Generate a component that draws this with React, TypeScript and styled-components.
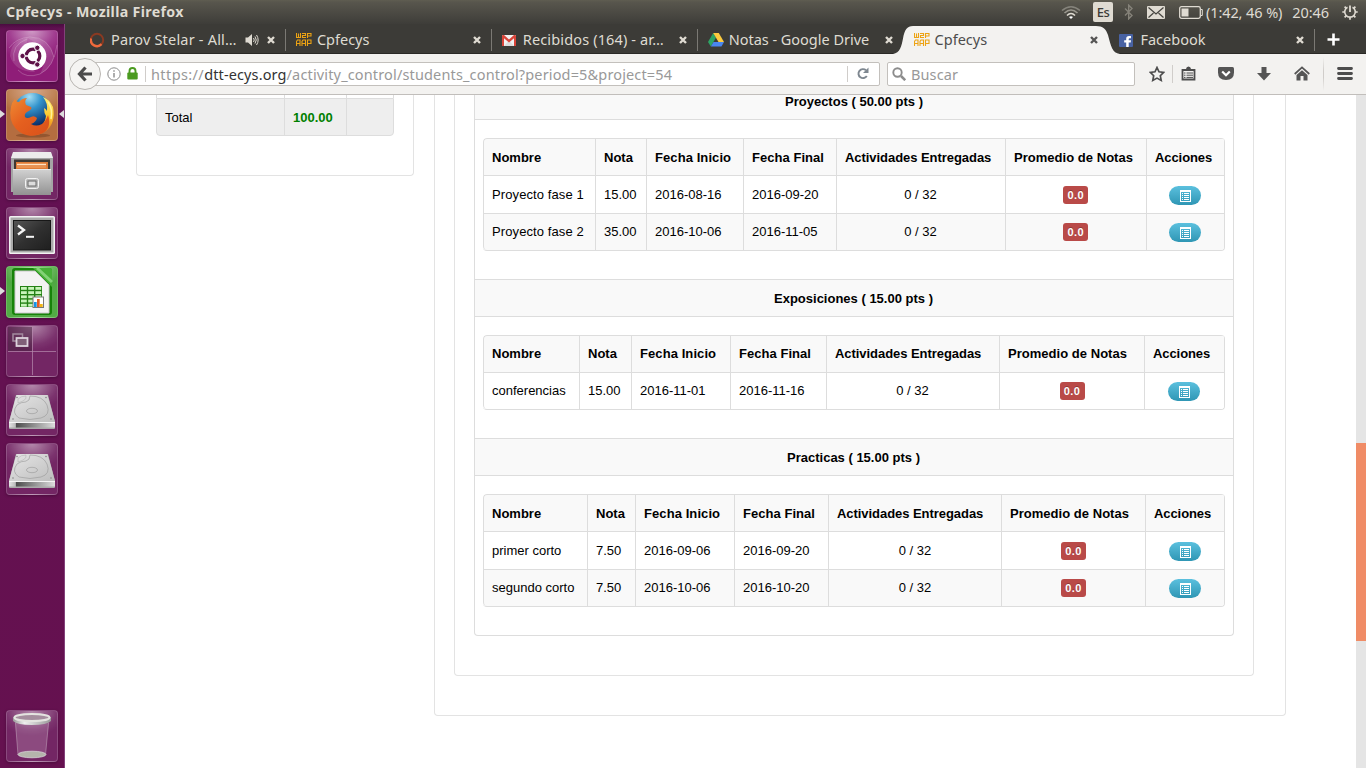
import React from "react";
import styled, { createGlobalStyle } from "styled-components";

const Global = createGlobalStyle`
  * { box-sizing: border-box; }
  html, body { margin: 0; padding: 0; overflow: hidden; background: #fff; }
  svg { display: block; flex: none; }
`;

const uiFont = `"Noto Sans", "Open Sans", sans-serif`;

const Desktop = styled.div`
  width: 1366px;
  height: 768px;
  display: flex;
  flex-direction: column;
  overflow: hidden;
  font-family: ${uiFont};
`;

const TopPanel = styled.header`
  height: 24px;
  flex: none;
  display: flex;
  align-items: center;
  background: linear-gradient(#5f5d51 0, #58564d 2px, #3e3d39 100%);
  color: #dfdbd2;
  padding-left: 6px;
`;

const UiText = styled.span<{ $size?: number; $ls?: number; $w?: number; $bold?: boolean }>`
  font-size: ${(p) => p.$size ?? 14.5}px;
  letter-spacing: ${(p) => p.$ls ?? 0}px;
  font-weight: ${(p) => (p.$bold ? 700 : 400)};
  ${(p) => p.$w && `width: ${p.$w}px;`}
  line-height: 20px;
  white-space: nowrap;
  flex: none;
`;

const Indicators = styled.div`
  margin-left: auto;
  width: 309px;
  height: 24px;
  display: flex;
  align-items: center;
  padding-left: 4px;
`;

const Lang = styled.span`
  width: 20px;
  height: 20px;
  margin: 0 11px 0 12px;
  border-radius: 2px;
  background: #dfdbd2;
  color: #3c3b37;
  font-size: 13px;
  font-weight: 500;
  letter-spacing: -0.5px;
  line-height: 21px;
  text-align: center;
`;

const Workspace = styled.div`
  flex: 1;
  display: flex;
  min-height: 0;
`;

const Launcher = styled.nav`
  width: 65px;
  flex: none;
  background: linear-gradient(#4a0c40 0, #631153 5px, #65114f 100%);
  border-right: 1px solid #83417a;
  padding: 6px 0 6px 6px;
  display: flex;
  flex-direction: column;
  gap: 7px;
`;

const Tile = styled.div<{ $bg?: string; $last?: boolean }>`
  position: relative;
  width: 52px;
  height: 52px;
  flex: none;
  border-radius: 4px;
  border: 1px solid rgba(255, 255, 255, 0.17);
  background: ${(p) =>
    p.$bg ??
    "radial-gradient(ellipse 34px 25px at 50% 0, rgba(255,255,255,.48), rgba(255,255,255,.1) 75%, rgba(255,255,255,.04)), #6d1d5e"};
  box-shadow: 0 1px 3px rgba(30, 0, 25, 0.35);
  ${(p) => p.$last && "margin-top: auto;"}
  & > svg { width: 52px; height: 52px; margin: -1px; }
`;

const Pip = styled.i<{ $right?: boolean }>`
  position: absolute;
  top: 20px;
  ${(p) => (p.$right ? "right: -7px; border-right: 5px solid #ddd;" : "left: -7px; border-left: 5px solid #ddd;")}
  border-top: 4px solid transparent;
  border-bottom: 4px solid transparent;
`;

const Browser = styled.main`
  flex: 1;
  min-width: 0;
  display: flex;
  flex-direction: column;
`;

const TabStrip = styled.div`
  position: relative;
  height: 30px;
  flex: none;
  display: flex;
  padding-left: 14px;
  background: #3c3b37;
  border-bottom: 1px solid #2a2926;
`;

const TabShape = styled.svg`
  position: absolute;
  left: 828px;
  top: 1px;
`;

const TabItem = styled.div<{ $active?: boolean; $line?: boolean }>`
  position: relative;
  width: 205.9px;
  height: 30px;
  flex: none;
  display: flex;
  align-items: center;
  padding: 2px 10px 0 11px;
  color: ${(p) => (p.$active ? "#4c4c4c" : "#dfdbd2")};
  &::after {
    content: "";
    position: absolute;
    right: -1px;
    top: 5px;
    width: 1px;
    height: 22px;
    background: ${(p) => (p.$line ? "#7b7974" : "transparent")};
  }
  & > svg:first-child { margin-right: 5px; }
  & > ${UiText} { margin-top: -2px; }
`;

const CloseMark = styled.svg`
  margin-left: auto;
`;

const NewTab = styled.div`
  width: 40px;
  display: flex;
  align-items: center;
  padding: 2px 0 0 12.5px;
`;

const Toolbar = styled.div`
  height: 41px;
  flex: none;
  display: flex;
  align-items: center;
  background: #f3f2f0;
  border-bottom: 1px solid #c1bebb;
  padding: 0 12px 1px 4px;
`;

const BackButton = styled.div`
  width: 32px;
  height: 32px;
  flex: none;
  border-radius: 50%;
  border: 1px solid #b8b5b1;
  background: #f5f4f2;
  display: flex;
  align-items: center;
  justify-content: center;
  z-index: 1;
`;

const Field = styled.div<{ $w: number }>`
  width: ${(p) => p.$w}px;
  height: 24px;
  flex: none;
  display: flex;
  align-items: center;
  background: #fff;
  border: 1px solid #c3c0bc;
  border-radius: 2px;
  color: #999;
`;

const UrlField = styled(Field)`
  margin-left: -8px;
  padding-left: 13px;
`;

const SearchField = styled(Field)`
  margin-left: 7px;
  padding-left: 4px;
`;

const Divider = styled.i<{ $h?: number; $m?: string; $fade?: boolean }>`
  width: 1px;
  height: ${(p) => p.$h ?? 16}px;
  flex: none;
  background: ${(p) => (p.$fade ? "linear-gradient(transparent, #d0cdca 40%, #d0cdca 60%, transparent)" : "#d0cdca")};
  margin: ${(p) => p.$m ?? "0"};
`;

const Scheme = styled.span`
  letter-spacing: 0.4px;
`;

const Host = styled.b`
  font-weight: 400;
  color: #333;
  letter-spacing: 0.12px;
`;

const ToolIcon = styled.svg<{ $ml: number }>`
  margin-left: ${(p) => p.$ml}px;
`;

const Slot = styled.span<{ $ml: number }>`
  margin-left: ${(p) => p.$ml}px;
  flex: none;
  display: flex;
`;

const Viewport = styled.div`
  flex: 1;
  min-height: 0;
  display: flex;
  align-items: flex-start;
  overflow: hidden;
  background: #fff;
  color: #000;
  font: 13px/20px "Liberation Sans", Arial, sans-serif;
`;

const ScrollTrack = styled.div`
  width: 10px;
  height: 100%;
  margin-left: auto;
  padding-top: 348px;
  background: #e5e5e5;
`;

const ScrollThumb = styled.div`
  height: 198px;
  background: #f08c66;
`;

const Panel = styled.section<{ $w: number; $pad: string; $line?: string }>`
  width: ${(p) => p.$w}px;
  flex: none;
  padding: ${(p) => p.$pad};
  border: 1px solid ${(p) => p.$line ?? "#e3e3e3"};
  border-top: 0;
  border-radius: 0 0 4px 4px;
`;

const SidePanel = styled(Panel)`
  margin: 0 20px 0 71px;
`;

const SummaryStub = styled.div`
  display: grid;
  grid-template-columns: 128px 62px 1fr;
  height: 3px;
  overflow: hidden;
  border: solid #ddd;
  border-width: 0 1px;
`;

const TotalRow = styled.div`
  display: grid;
  grid-template-columns: 128px 62px 1fr;
  height: 38px;
  background: #eee;
  border: 1px solid #ddd;
  border-radius: 0 0 4px 4px;
`;

const TotalCell = styled.div`
  padding: 9px 8px 0;
  & + & { border-left: 1px solid #ddd; margin-left: -1px; }
`;

const Amount = styled(TotalCell)`
  font-weight: 700;
  color: #008000;
`;

const Group = styled.div`
  & + & { margin-top: 28px; }
  &:first-child { margin-top: -13px; }
`;

const GroupTitle = styled.h4<{ $shift: number }>`
  height: 38px;
  margin: 0;
  padding-right: ${(p) => p.$shift}px;
  font: inherit;
  font-weight: 700;
  line-height: 37px;
  text-align: center;
  background: #f9f9f9;
  border: solid #ddd;
  border-width: 1px 0;
`;

const Grid = styled.div`
  width: 742px;
  margin: 18px 0 0 8px;
  border: 1px solid #ddd;
  border-width: 0 1px 1px 0;
  border-radius: 4px;
  overflow: hidden;
`;

const GridRow = styled.div<{ $cols: string; $h: number; $shade?: boolean; $head?: boolean }>`
  display: grid;
  grid-template-columns: ${(p) => p.$cols};
  height: ${(p) => p.$h}px;
  background: ${(p) => (p.$shade ? "#f9f9f9" : "#fff")};
  font-weight: ${(p) => (p.$head ? 700 : 400)};
`;

const Cell = styled.div<{ $center?: boolean; $corner?: string; $drop?: number; $ls?: number }>`
  border: solid #ddd;
  border-width: 1px 0 0 1px;
  border-radius: ${(p) => p.$corner ?? "0"};
  padding: ${(p) => (p.$drop ?? 0) * 2}px 8px 0;
  letter-spacing: ${(p) => p.$ls ?? 0}px;
  display: flex;
  align-items: center;
  justify-content: ${(p) => (p.$center ? "center" : "flex-start")};
  white-space: nowrap;
`;

const CountCell = styled(Cell)<{ $trim: number }>`
  padding-right: ${(p) => 8 + p.$trim}px;
`;

const Badge = styled.span<{ $top: number; $trim: number }>`
  align-self: flex-start;
  width: 25px;
  height: 18px;
  margin-top: ${(p) => p.$top}px;
  margin-right: ${(p) => p.$trim}px;
  border-radius: 3px;
  background: #b94a48;
  color: #fff;
  font-size: 11px;
  font-weight: 700;
  line-height: 18px;
  letter-spacing: 0.35px;
  text-align: center;
  text-shadow: 0 -1px 0 rgba(0, 0, 0, 0.25);
`;

const ActionButton = styled.button<{ $top: number }>`
  align-self: flex-start;
  width: 32px;
  height: 19px;
  margin-top: ${(p) => p.$top}px;
  margin-left: -1px;
  padding: 1px 0 0 1px;
  border: 0;
  border-radius: 10px;
  background: linear-gradient(#5bc0de, #2f96b4);
  display: flex;
  align-items: center;
  justify-content: center;
`;

/* ---------- browser glyphs ---------- */

const Close = ({ color = "#dfdbd2" }: { color?: string }) => (
  <CloseMark width="8" height="8" viewBox="0 0 8 8">
    <path d="M1 1 7 7M7 1 1 7" stroke={color} strokeWidth="2.4" />
  </CloseMark>
);

const W2PIcon = () => (
  <svg width="16" height="16" viewBox="0 0 16 16">
    <path
      fill="none"
      stroke="#eda313"
      strokeWidth="1.1"
      d="M.5 1v4.500H4.500V1M2.500 1.500V5M6 1.500h3.500v2h-3V5.500H10M11.500 6V1.500h3.500v2.500h-3.500M.5 14V9.500l1-1.500h2.500V14M.5 11.500h4M6 14V9.500l1-1.500H9.500v6M6 11.500h3.500M11.500 14V8H15v3.500h-3.500"
    />
  </svg>
);

const Spinner = () => (
  <svg width="16" height="16" viewBox="0 0 16 16">
    <circle cx="7" cy="8" r="6.200" fill="none" stroke="#8a3a22" strokeWidth="2" />
    <path d="M1 6.500A6.200 6.200 0 0 0 11.500 12.200" fill="none" stroke="#ef6a3c" strokeWidth="2.400" />
  </svg>
);

const Speaker = () => (
  <svg width="14" height="14" viewBox="0 0 14 14" fill="none" stroke="#dfdbd2">
    <path d="M.5 4.500v5H3l4 3.500v-12L3 4.500z" fill="#dfdbd2" stroke="none" />
    <path d="M8.500 5q1.500 2 0 4M10 3.500q2.500 3.500 0 7M11.500 2q3.300 5 0 10" />
  </svg>
);

const Gmail = () => (
  <svg width="16" height="16" viewBox="0 0 16 16">
    <rect x="0" y="3" width="14" height="11" rx="1" fill="#f2f2f2" />
    <path d="M2 14 7 8.500 12 14z" fill="#ddd" />
    <path d="M0 14V4q0-1 1-1h1l5 4.500L12 3h1q1 0 1 1v10h-2V6.300L7 10.500 2 6.300V14z" fill="#d9453a" />
  </svg>
);

const Drive = () => (
  <svg width="16" height="16" viewBox="0 0 16 16">
    <path d="M5.200 1 0 10 2.800 14.500 8 5.500z" fill="#2da565" />
    <path d="M5.200 1h5.600L16 10h-5.500z" fill="#fdcb3f" />
    <path d="M5.500 10H16L13.500 14.500H2.800z" fill="#4a86ef" />
  </svg>
);

const FacebookIcon = () => (
  <svg width="16" height="16" viewBox="0 0 16 16">
    <rect x="0" y="2" width="14" height="13" rx="1" fill="#4862a3" />
    <path d="M7.200 15v-4.500H5.200V8.300h2V6.800Q7.200 4 10 4h2v2.200h-1.300q-1 0-1 1v1.100H12l-.3 2.200h-2V15z" fill="#fff" />
  </svg>
);

const ListIcon = () => (
  <svg width="11" height="12" viewBox="0 0 11 12">
    <path
      fillRule="evenodd"
      fill="#fff"
      d="M0 0h11v12H0zM1 2v9h9V2z"
    />
    <path d="M2 3h1v1H2zM4 3h5v1H4zM2 5h1v1H2zM4 5h5v1H4zM2 7h1v1H2zM4 7h5v1H4zM2 9h1v1H2zM4 9h5v1H4z" fill="#fff" />
  </svg>
);

const Wifi = () => (
  <svg width="20" height="16" viewBox="0 0 20 16" fill="none" strokeWidth="1.600">
    <path d="M1 6.500Q10-1 19 6.500" stroke="#85837b" />
    <path d="M3.500 9Q10 3 16.500 9" stroke="#9b988f" />
    <path d="M6 11.500Q10 7.500 14 11.500" stroke="#dfdbd2" />
    <path d="M8 13Q10 11.500 12 13L10 15z" fill="#fff" stroke="none" />
  </svg>
);

const Bluetooth = () => (
  <svg width="10" height="16" viewBox="0 0 10 16" fill="none" stroke="#858279" strokeWidth="1.400">
    <path d="M1 4.500 8 11.500 4.700 14.800V1.200L8 4.500 1 11.500" />
  </svg>
);

const Mail = () => (
  <svg width="18" height="13" viewBox="0 0 18 13">
    <rect width="18" height="13" rx="1" fill="#dfdbd2" />
    <path d="M1.500 1.500 9 8l7.500-6.500M1.500 11.500 6.500 7M16.500 11.500l-5-4.500" fill="none" stroke="#45443f" strokeWidth="1.200" />
  </svg>
);

const Battery = () => (
  <svg width="24" height="13" viewBox="0 0 24 13">
    <rect x=".7" y=".7" width="20.600" height="11.600" rx="1.800" fill="none" stroke="#dfdbd2" strokeWidth="1.300" />
    <path d="M22 3.500h1.300v6H22" fill="none" stroke="#dfdbd2" />
    <rect x="2.500" y="2.500" width="7" height="8" fill="#dfdbd2" />
  </svg>
);

const Gear = () => (
  <svg width="16" height="16" viewBox="0 0 16 16" fill="none" stroke="#dfdbd2">
    <path d="M5.500 3.200A5.300 5.300 0 1 0 10.500 3.200" strokeWidth="1.600" />
    <path d="M8 1.500V8" strokeWidth="1.800" />
    <path d="M8 13.500V15.700M.3 8h2.500M13.200 8h2.500M2.600 2.600 4.300 4.300M13.400 2.600 11.700 4.300M2.600 13.400 4.300 11.700M13.400 13.400 11.700 11.700" strokeWidth="1.700" />
  </svg>
);

/* ---------- launcher artwork ---------- */

const UbuntuArt = () => (
  <svg viewBox="0 0 52 52">
    <g fill="none" stroke="#fff" strokeOpacity=".22">
      <path d="M3 18Q10 8 24 7 43 7 48 27" />
      <path d="M8 31Q5 15 21 9M12 40Q20 49 34 44 48 37 51 15" />
    </g>
    <path d="M4 26Q5 10 22 8L17 24 29 42Q9 42 4 26Z" fill="#fff" opacity=".13" />
    <path d="M22 8Q42 6 48 27 44 40 34 44 42 30 34 16Z" fill="#fff" opacity=".12" />
    <circle cx="26.300" cy="26.300" r="14" fill="#fff" />
    <circle cx="27" cy="26" r="6.800" fill="none" stroke="#5e1248" strokeWidth="3.200" />
    <path d="M23 26H14M29 29l4 7M29 23l4-7" stroke="#fff" strokeWidth="1.600" />
    <g fill="#5e1248" stroke="#fff" strokeWidth="1">
      <circle cx="16.500" cy="26" r="2.700" />
      <circle cx="31.300" cy="17.800" r="2.700" />
      <circle cx="31.300" cy="34.500" r="2.700" />
    </g>
  </svg>
);

const FirefoxArt = () => (
  <svg viewBox="0 0 52 52">
    <defs>
      <radialGradient id="ffglobe" cx=".42" cy=".1" r=".75">
        <stop offset="0" stopColor="#a5def3" />
        <stop offset=".4" stopColor="#3394cd" />
        <stop offset="1" stopColor="#0b2e68" />
      </radialGradient>
      <linearGradient id="ffbody" x1="0" y1="0" x2="1" y2="1">
        <stop offset="0" stopColor="#ee8c35" />
        <stop offset=".45" stopColor="#e5601f" />
        <stop offset="1" stopColor="#d9501a" />
      </linearGradient>
      <linearGradient id="fftail" x1="0" y1="0" x2="0" y2="1">
        <stop offset="0" stopColor="#fff27a" />
        <stop offset=".5" stopColor="#fbc62b" />
        <stop offset="1" stopColor="#e2611e" />
      </linearGradient>
    </defs>
    <ellipse cx="27" cy="46.500" rx="17" ry="2" fill="#6b3a1c" opacity=".45" />
    <circle cx="26.500" cy="23.500" r="19.500" fill="url(#ffglobe)" />
    <path d="M37 8Q43 10 47 18 50 34 40 42 31 48 22 46L23 39Q38 41 40 27 38 24 38 19 40 20 41 22 42 14 37 8Z" fill="url(#fftail)" />
    <path d="M5 18Q6 13 9 10 10 13 13 13 16 9 21 9 18 12 20 16L25 18Q27 20 21 23 18 25 19 28 21 30 25 28 28 26 31 29 30 33 25 35 30 38 36 35 40 32 42 26 46 38 37 44 21 51 10 40 2 31 5 18Z" fill="url(#ffbody)" />
    <path d="M42 13Q47 20 45 30" fill="none" stroke="#fff39a" strokeWidth="1.500" />
  </svg>
);

const FilesArt = () => (
  <svg viewBox="0 0 52 52">
    <defs>
      <linearGradient id="cab" x1="0" y1="0" x2="0" y2="1">
        <stop offset="0" stopColor="#d2d2d2" />
        <stop offset="1" stopColor="#929292" />
      </linearGradient>
    </defs>
    <path d="M7 5h38l2 5v34H5V10z" fill="#a5a5a5" />
    <path d="M7 4h38l2 6H5z" fill="#ececec" />
    <rect x="8" y="11.500" width="36" height="12" fill="#3f3933" />
    <path d="M10 14h32v7H10z" fill="#df7b36" />
    <path d="M11 16.500h29" stroke="#ffe2c3" strokeWidth="1.500" />
    <path d="M11 19h29" stroke="#f3ab6d" />
    <path d="M7 21h38v26H7z" fill="url(#cab)" />
    <path d="M7 21.500h38" stroke="#e9e9e9" />
    <rect x="19.500" y="30.500" width="13" height="10" rx="2" fill="#bbb" stroke="#f3f3f3" />
    <rect x="22" y="33" width="8" height="5" fill="#ddd" stroke="#696969" />
  </svg>
);

const TerminalArt = () => (
  <svg viewBox="0 0 52 52">
    <defs>
      <linearGradient id="scr" x1="0" y1="0" x2="1" y2="1">
        <stop offset="0" stopColor="#555" />
        <stop offset=".5" stopColor="#303030" />
        <stop offset="1" stopColor="#1f1f1f" />
      </linearGradient>
    </defs>
    <rect x="3" y="9" width="46" height="38" rx="1.500" fill="#f2f2f2" />
    <rect x="4.500" y="10.500" width="43" height="35" fill="#aaa" />
    <rect x="7.500" y="13.500" width="37" height="29.500" fill="url(#scr)" stroke="#171717" />
    <path d="M12 18.500 18 23l-6 4.500" fill="none" stroke="#f5f5f5" strokeWidth="2.300" />
    <path d="M20 29.800h8" stroke="#f5f5f5" strokeWidth="2" />
  </svg>
);

const CalcArt = () => (
  <svg viewBox="0 0 52 52">
    <rect x="6" y="2" width="40" height="47" rx="3" fill="#178309" />
    <path d="M27 2h17q2 0 2 2v17z" fill="#47af37" />
    <path d="M31 2 46 16" stroke="#83d276" strokeWidth="3" />
    <path d="M9 5h20l14 14v28H9z" fill="#f3f3f3" stroke="#c9c9c9" strokeWidth="1" />
    <rect x="14" y="20" width="22" height="21" fill="#248115" />
    <g fill="#c8f4ba">
      {[21, 25.2, 29.4, 33.6, 37.8].map((y) =>
        [15, 22.2, 29.4].map((x) => <rect key={`${x}-${y}`} x={x} y={y} width="5.800" height="2.800" />)
      )}
    </g>
    <rect x="27" y="31" width="10.500" height="10.500" fill="#fff" stroke="#777" />
    <path d="M28 36h2.700v5H28z" fill="#1694e8" />
    <path d="M31 33h2.700v8H31z" fill="#e85c20" />
    <path d="M34 38h2.700v3H34z" fill="#f1b414" />
  </svg>
);

const SwitcherArt = () => (
  <svg viewBox="0 0 52 52">
    <rect x="2" y="2" width="24" height="24" fill="#43213c" opacity=".5" />
    <path d="M26.500 2v48M2 26.500h48" stroke="#b68bae" strokeOpacity=".7" />
    <rect x="7" y="9" width="9.500" height="7" fill="none" stroke="#a28a9e" strokeWidth="1.500" />
    <rect x="10.500" y="13" width="11" height="8" fill="#806078" stroke="#ddd3dc" strokeWidth="1.800" />
  </svg>
);

const DiskArt = () => (
  <svg viewBox="0 0 52 52">
    <defs>
      <linearGradient id="dtop" x1="0" y1="0" x2="1" y2="1">
        <stop offset="0" stopColor="#e6e6e6" />
        <stop offset="1" stopColor="#bdbdbd" />
      </linearGradient>
      <linearGradient id="dfront">
        <stop offset="0" stopColor="#e4e4e4" />
        <stop offset=".14" stopColor="#bbb" />
        <stop offset=".15" stopColor="#4b4b4b" />
        <stop offset=".6" stopColor="#999" />
        <stop offset="1" stopColor="#ddd" />
      </linearGradient>
    </defs>
    <path d="M10 11h32l7 27v6q0 1-1 1H4q-1 0-1-1v-6z" fill="#aaa" />
    <path d="M10.500 11h31L49 38H3z" fill="url(#dtop)" />
    <path d="M3 38h46v5.500H3z" fill="url(#dfront)" />
    <path d="M3 38.500h46" stroke="#f4f4f4" />
    <g fill="none" stroke="#989898" strokeOpacity=".6">
      <path d="M24 12Q37 12 41 21 45 31 35 34 24 37 13 34 5 29 11 21 15 18 20 18 24 17 24 12Z" />
      <ellipse cx="26" cy="27" rx="5.500" ry="2.700" />
      <path d="M12 15Q15 12 20 12 21 15 17 17L12 19Z" strokeOpacity=".35" />
    </g>
    <g fill="#858585">
      <circle cx="11" cy="13.500" r=".8" /><circle cx="40" cy="13.500" r=".8" />
      <circle cx="7" cy="35" r=".8" /><circle cx="45" cy="35" r=".8" />
    </g>
  </svg>
);

const TrashArt = () => (
  <svg viewBox="0 0 52 52">
    <defs>
      <linearGradient id="rim">
        <stop offset="0" stopColor="#999" /><stop offset=".3" stopColor="#eee" />
        <stop offset=".7" stopColor="#bdbdbd" /><stop offset="1" stopColor="#999" />
      </linearGradient>
    </defs>
    <path d="M9 11h34l-3.500 34q-13 5-27.500 0z" fill="#f2dced" opacity=".2" />
    <path d="M9.500 13 12 45M42.500 13 39.500 45" stroke="#c4a7bd" strokeOpacity=".5" />
    <ellipse cx="26" cy="44.500" rx="14" ry="3.300" fill="#b5b5ac" stroke="#dedede" strokeWidth=".7" />
    <path d="M7 7v4q4 4 19 4t19-4V7z" fill="url(#rim)" />
    <ellipse cx="26" cy="7.500" rx="17.500" ry="3.500" fill="#a58e9e" stroke="#e4e4e0" strokeWidth="2" />
  </svg>
);

/* ---------- data ---------- */

const headings = [
  { text: "Nombre", ls: 0 },
  { text: "Nota", ls: 0 },
  { text: "Fecha Inicio", ls: 0.08 },
  { text: "Fecha Final", ls: 0.04 },
  { text: "Actividades Entregadas", ls: -0.05 },
  { text: "Promedio de Notas", ls: 0.03 },
  { text: "Acciones", ls: -0.08 },
];

const groups = [
  {
    title: "Proyectos ( 50.00 pts )",
    cols: "112px 51px 97px 93px 169px 141px 78px",
    titleShift: 0,
    headDrop: 1,
    countTrim: 1,
    badgeTrim: 0.5,
    rows: [
      ["Proyecto fase 1", "15.00", "2016-08-16", "2016-09-20", "0 / 32", "0.0"],
      ["Proyecto fase 2", "35.00", "2016-10-06", "2016-11-05", "0 / 32", "0.0"],
    ],
  },
  {
    title: "Exposiciones ( 15.00 pts )",
    cols: "96px 52px 99px 96px 173px 145px 80px",
    titleShift: 1,
    headDrop: 0,
    countTrim: 1,
    badgeTrim: 0,
    rows: [["conferencias", "15.00", "2016-11-01", "2016-11-16", "0 / 32", "0.0"]],
  },
  {
    title: "Practicas ( 15.00 pts )",
    cols: "104px 48px 99px 94px 173px 144px 79px",
    titleShift: 1,
    headDrop: 1,
    countTrim: 0,
    badgeTrim: 0,
    rows: [
      ["primer corto", "7.50", "2016-09-06", "2016-09-20", "0 / 32", "0.0"],
      ["segundo corto", "7.50", "2016-10-06", "2016-10-20", "0 / 32", "0.0"],
    ],
  },
];

const ActivityGroup = ({ title, cols, titleShift, headDrop, countTrim, badgeTrim, rows }: (typeof groups)[number]) => (
  <Group>
    <GroupTitle $shift={titleShift}>{title}</GroupTitle>
    <Grid>
      <GridRow $cols={cols} $h={37} $shade $head>
        {headings.map((h, i) => (
          <Cell key={h.text} $ls={h.ls} $drop={headDrop} $corner={i === 0 ? "4px 0 0 0" : undefined}>{h.text}</Cell>
        ))}
      </GridRow>
      {rows.map((row, r) => {
        const tall = r === 0 && rows.length > 1;
        const top = tall ? 10 : 9;
        return (
          <GridRow key={row[0]} $cols={cols} $h={tall ? 38 : 37} $shade={r % 2 === 1}>
            {row.slice(0, 4).map((v, i) => (
              <Cell
                key={i}
                $ls={v.startsWith("Proyecto") ? 0.1 : 0}
                $corner={i === 0 && r === rows.length - 1 ? "0 0 0 4px" : undefined}
              >
                {v}
              </Cell>
            ))}
            <CountCell $center $trim={countTrim}>{row[4]}</CountCell>
            <Cell $center><Badge $top={top} $trim={badgeTrim}>{row[5]}</Badge></Cell>
            <Cell $center><ActionButton $top={top}><ListIcon /></ActionButton></Cell>
          </GridRow>
        );
      })}
    </Grid>
  </Group>
);

export default function App() {
  return (
    <Desktop>
      <Global />
      <TopPanel>
        <UiText $bold $size={14.2} $ls={0.34}>Cpfecys - Mozilla Firefox</UiText>
        <Indicators>
          <Wifi />
          <Lang>Es</Lang>
          <Bluetooth />
          <Slot $ml={13}><Mail /></Slot>
          <Slot $ml={14}><Battery /></Slot>
          <Slot $ml={3}><UiText $ls={-0.1}>(1:42, 46 %)</UiText></Slot>
          <Slot $ml={10}><UiText $ls={-0.1}>20:46</UiText></Slot>
          <Slot $ml={13}><Gear /></Slot>
        </Indicators>
      </TopPanel>
      <Workspace>
        <Launcher>
          <Tile $bg="radial-gradient(ellipse 38px 30px at 50% 0, #cf9ac6, #a13d90 60%, #8f1d78)"><UbuntuArt /></Tile>
          <Tile $bg="radial-gradient(ellipse 34px 25px at 50% 0, #d8ab8e, #b97949 85%, #b46d40)">
            <FirefoxArt /><Pip /><Pip $right />
          </Tile>
          <Tile><FilesArt /></Tile>
          <Tile><TerminalArt /></Tile>
          <Tile $bg="radial-gradient(ellipse 38px 30px at 50% 0, #a9dda0, #50a743 75%, #52ab45)"><CalcArt /><Pip /></Tile>
          <Tile><SwitcherArt /></Tile>
          <Tile><DiskArt /></Tile>
          <Tile><DiskArt /></Tile>
          <Tile $last><TrashArt /></Tile>
        </Launcher>
        <Browser>
          <TabStrip>
            <TabShape width="230" height="29" viewBox="0 0 230 29">
              <path d="M0 29C7 28 8.500 21 10 13.500 11.500 5 14 1 20 1H203C210 1 213 4 215 10 218 21 219 28 227 29Z" fill="#f3f2f0" />
            </TabShape>
            <TabItem $line>
              <Spinner /><UiText $w={134} $ls={0.2}>Parov Stelar - All…</UiText><Speaker /><Close />
            </TabItem>
            <TabItem $line><W2PIcon /><UiText>Cpfecys</UiText><Close /></TabItem>
            <TabItem $line><Gmail /><UiText $ls={0.14}>Recibidos (164) - ar…</UiText><Close /></TabItem>
            <TabItem><Drive /><UiText $ls={-0.02}>Notas - Google Drive</UiText><Close /></TabItem>
            <TabItem $active><W2PIcon /><UiText>Cpfecys</UiText><Close color="#555" /></TabItem>
            <TabItem $line><FacebookIcon /><UiText>Facebook</UiText><Close /></TabItem>
            <NewTab>
              <svg width="13" height="13" viewBox="0 0 13 13"><path d="M6.500.5v12M.5 6.500h12" stroke="#fff" strokeWidth="2.600" /></svg>
            </NewTab>
          </TabStrip>
          <Toolbar>
            <BackButton>
              <svg width="16" height="16" viewBox="0 0 16 16"><path d="M8.500 1.500 2.500 8l6 6.500M3 8h12" fill="none" stroke="#4b4b4b" strokeWidth="3.200" /></svg>
            </BackButton>
            <UrlField $w={787}>
              <svg width="14" height="14" viewBox="0 0 14 14">
                <circle cx="7" cy="7" r="6.200" fill="none" stroke="#8a8a8a" />
                <path d="M7 6v4.500M7 3.300v1.500" stroke="#8a8a8a" strokeWidth="1.400" />
              </svg>
              <ToolIcon $ml={6} width="11" height="13" viewBox="0 0 11 13">
                <path d="M2.500 6V4a3 3 0 0 1 6 0v2" fill="none" stroke="#4b9b20" strokeWidth="1.900" />
                <rect x=".3" y="5.500" width="10.400" height="7" rx="1" fill="#4b9b20" />
              </ToolIcon>
              <Divider $m="0 5px 0 7px" />
              <UiText $ls={0.15}><Scheme>https://</Scheme><Host>dtt-ecys.org</Host>/activity_control/students_control?period=5&amp;project=54</UiText>
              <Divider $m="0 9px 0 auto" />
              <svg width="22" height="13" viewBox="0 0 22 13">
                <path d="M9.800 9A4.500 4.500 0 1 1 9 3.300" fill="none" stroke="#7e8790" strokeWidth="1.900" />
                <path d="M11.500.5v5.500H6z" fill="#7e8790" />
              </svg>
            </UrlField>
            <SearchField $w={248}>
              <svg width="14" height="14" viewBox="0 0 14 14" fill="none" stroke="#8c8c8c">
                <circle cx="5.500" cy="5.500" r="4.200" strokeWidth="1.900" /><path d="m9 9 4.200 4.200" strokeWidth="2.500" />
              </svg>
              <Slot $ml={5}><UiText $ls={0.1}>Buscar</UiText></Slot>
            </SearchField>
            <ToolIcon $ml={14} width="16" height="16" viewBox="0 0 16 16">
              <path d="m8 1.500 2 4.300 4.700.6-3.400 3.300.9 4.700L8 12.100l-4.200 2.300.9-4.700L1.300 6.400 6 5.800z" fill="none" stroke="#4d4d4d" strokeWidth="1.700" />
            </ToolIcon>
            <Divider $h={18} $m="0 0 0 7px" />
            <ToolIcon $ml={8} width="15" height="15" viewBox="0 0 15 15">
              <path d="M1.500 4h12v9.500h-12z" fill="#f3f2f0" stroke="#4d4d4d" strokeWidth="1.800" />
              <path d="M3.500 5V3H5q.3-2.500 2.500-2.500T10 3h1.500v2z" fill="#4d4d4d" />
              <path d="M3 7h1.500M5.500 7H12M3 9.200h1.500M5.500 9.200H12M3 11.400h1.500M5.500 11.400H12" stroke="#4d4d4d" />
            </ToolIcon>
            <ToolIcon $ml={22} width="16" height="15" viewBox="0 0 16 15">
              <path d="M1.500 1h13q1.500 0 1.500 1.500v4q0 7.500-8 7.500T0 6.500v-4Q0 1 1.500 1z" fill="#555" />
              <path d="m4.200 5.500 3.800 3.700 3.800-3.700" fill="none" stroke="#fff" strokeWidth="2.200" />
            </ToolIcon>
            <ToolIcon $ml={23} width="14" height="14" viewBox="0 0 14 14">
              <path d="M4.500 0h5v6H14l-7 7.500L0 6h4.500z" fill="#555" />
            </ToolIcon>
            <ToolIcon $ml={23} width="16" height="15" viewBox="0 0 16 15">
              <path d="M.7 8 8 1.300 15.300 8" fill="none" stroke="#555" strokeWidth="1.700" />
              <path d="M8 4.200 13.500 9v5.500H9.500V10h-3v4.500h-4V9z" fill="#555" />
            </ToolIcon>
            <Divider $h={34} $m="0 0 0 13px" $fade />
            <ToolIcon $ml={13} width="16" height="13" viewBox="0 0 16 13">
              <path d="M1.500 1.500h13M1.500 6.500h13M1.500 11.500h13" stroke="#4d4d4d" strokeWidth="2.800" strokeLinecap="round" />
            </ToolIcon>
          </Toolbar>
          <Viewport>
            <SidePanel $w={278} $pad="0 19px 39px">
              <SummaryStub><TotalCell /><TotalCell /><TotalCell /></SummaryStub>
              <TotalRow><TotalCell>Total</TotalCell><Amount>100.00</Amount><TotalCell /></TotalRow>
            </SidePanel>
            <Panel $w={852} $pad="0 31px 39px 19px">
              <Panel $w={800} $pad="0 19px 39px 19px">
                <Panel $w={760} $pad="0 0 28px" $line="#ddd">
                  {groups.map((g) => <ActivityGroup key={g.title} {...g} />)}
                </Panel>
              </Panel>
            </Panel>
            <ScrollTrack><ScrollThumb /></ScrollTrack>
          </Viewport>
        </Browser>
      </Workspace>
    </Desktop>
  );
}
